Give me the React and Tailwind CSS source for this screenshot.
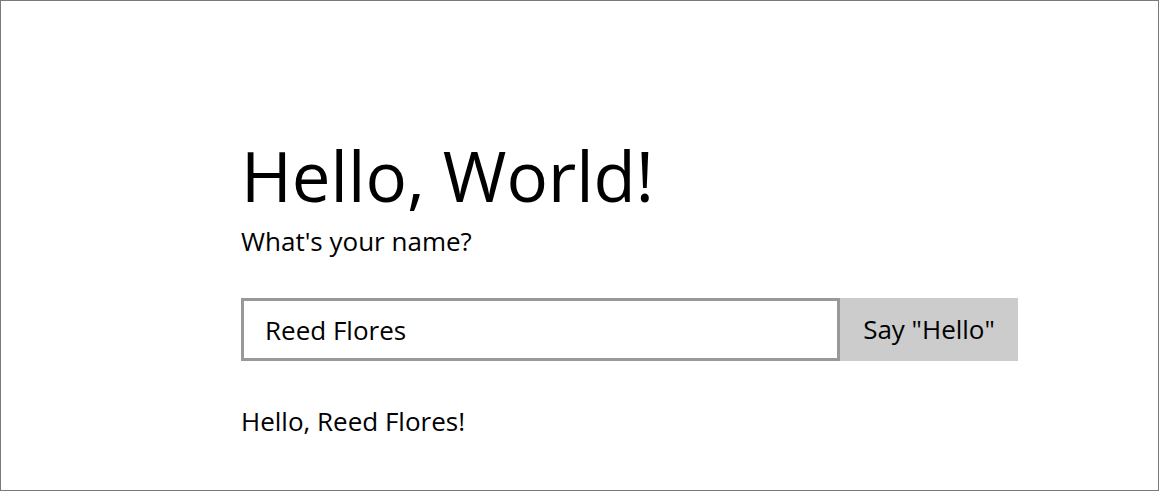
import React, { useState } from "react";

export default function App() {
  const [name, setName] = useState("Reed Flores");
  const [greeting, setGreeting] = useState("Reed Flores");

  return (
    <div
      className="h-[491px] w-[1159px] overflow-hidden border border-[#7a7a7a] bg-white text-black"
      style={{ fontFamily: '"Open Sans", "Noto Sans", sans-serif' }}
    >
      <div className="flex flex-col pl-[240px] pt-[132px]">
        <h1 className="text-[69px] font-normal leading-[84px]">Hello, World!</h1>
        <p className="mt-[8px] text-[26px] leading-[32px]">What's your name?</p>

        <div className="mt-[41px] flex">
          <input
            value={name}
            onChange={(e) => setName(e.target.value)}
            className="h-[63px] w-[599px] border-[3px] border-[#999999] bg-white pl-[21px] text-[26px] outline-none"
          />
          <button
            onClick={() => setGreeting(name)}
            className="h-[63px] w-[178px] bg-[#cccccc] text-[26px]"
          >
            Say "Hello"
          </button>
        </div>

        <p className="mt-[44px] text-[26px] leading-[32px]">Hello, {greeting}!</p>
      </div>
    </div>
  );
}
